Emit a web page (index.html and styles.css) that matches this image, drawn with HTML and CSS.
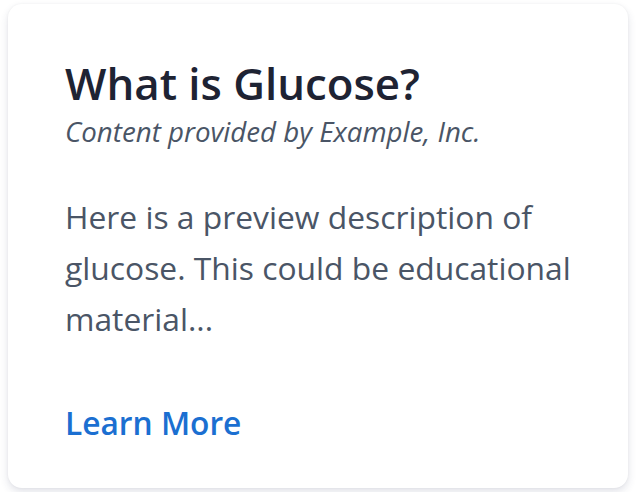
FILE: index.html
```html
<!DOCTYPE html>
<html>
<head>
<meta charset="utf-8">
<link rel="stylesheet" href="styles.css">
</head>
<body>
<div class="card">
  <h1 class="title">What is Glucose?</h1>
  <p class="subtitle">Content provided by Example, Inc.</p>
  <p class="desc">Here is a preview description of glucose. This could be educational material...</p>
  <a class="link" href="#">Learn More</a>
</div>
</body>
</html>
```
FILE: styles.css
```css
html, body {
  margin: 0;
  background: #ffffff;
}
body {
  padding: 4px 8px;
  font-family: "Open Sans", "Noto Sans", sans-serif;
}
.card {
  width: 620px;
  box-sizing: border-box;
  background: #fff;
  border-radius: 14px;
  box-shadow: 0 4px 8px rgba(50, 60, 100, 0.14), 0 0 3px rgba(0, 0, 0, 0.05);
  padding: 52px 30px 41px 57px;
}
.title {
  margin: 0;
  font-size: 43.8px;
  line-height: 54px;
  font-weight: 600;
  color: #1e2333;
}
.subtitle {
  margin: 1px 0 0;
  font-size: 27.7px;
  line-height: 40.8px;
  font-style: italic;
  color: #4a5566;
}
.desc {
  margin: 39px 0 0;
  font-size: 31.8px;
  line-height: 51.2px;
  color: #4a5566;
}
.link {
  display: block;
  margin-top: 55px;
  font-size: 31.7px;
  line-height: 48px;
  font-weight: 600;
  color: #1b6fd1;
  text-decoration: none;
}
```
